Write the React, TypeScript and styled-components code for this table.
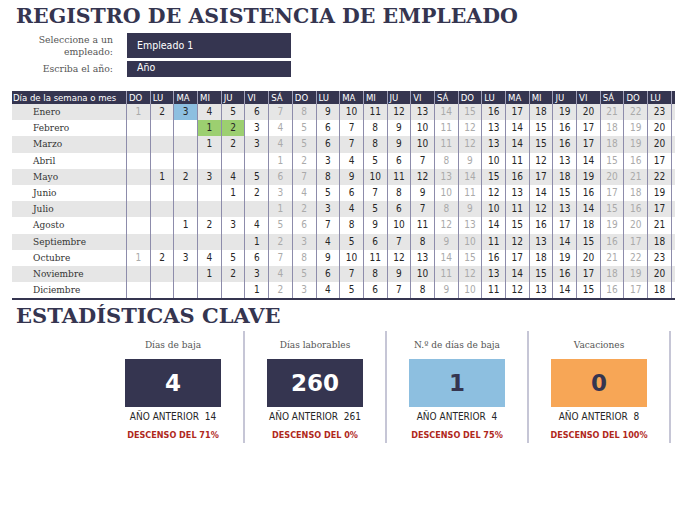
import React from "react";
import styled, { createGlobalStyle } from "styled-components";

const NAVY = "#353550";
const SANS = `"DejaVu Sans Condensed", "DejaVu Sans", "Liberation Sans", sans-serif`;

const Global = createGlobalStyle`
  html, body { margin: 0; padding: 0; background: #fff; overflow: hidden; }
  body { width: 675px; height: 520px; }
`;

const Page = styled.div`
  width: 675px;
  height: 520px;
  overflow: hidden;
  position: relative;
`;

const Title = styled.h1`
  margin: 0;
  padding: 4px 0 0 16px;
  font-family: "DejaVu Serif", serif;
  font-weight: 700;
  font-size: 20.5px;
  line-height: 24px;
  color: ${NAVY};
  white-space: nowrap;
`;

const Form = styled.div`
  display: grid;
  grid-template-columns: 113px 164px;
  grid-template-rows: 25px 16px;
  column-gap: 14px;
  row-gap: 3px;
  margin-top: 5px;
`;

const Label = styled.div`
  font-family: "DejaVu Serif", serif;
  font-size: 9.3px;
  line-height: 12px;
  color: #555;
  text-align: right;
  align-self: center;
`;

const Input = styled.div<{ $top?: boolean }>`
  background: ${NAVY};
  color: #fff;
  font-family: ${SANS};
  font-stretch: condensed;
  font-size: 10.5px;
  display: flex;
  align-items: ${(p) => (p.$top ? "flex-start" : "center")};
  padding-left: 10px;
  line-height: 13px;
`;

const TableWrap = styled.div`
  margin: 14px 0 0 12px;
  width: 663px;
  overflow: hidden;
  border-bottom: 2px solid ${NAVY};
`;

const Table = styled.div`
  display: grid;
  grid-template-columns: 114px repeat(23, 23.7px) 4px;
  grid-template-rows: 13px repeat(12, 16.2px);
  width: max-content;
`;

const HeadCell = styled.div<{ $first?: boolean }>`
  background: ${NAVY};
  color: #fff;
  font-family: ${SANS};
  font-stretch: condensed;
  font-size: 9.5px;
  line-height: 13px;
  padding-left: ${(p) => (p.$first ? "1px" : "2px")};
  border-left: ${(p) => (p.$first ? "none" : "1px solid #a0a0b8")};
  white-space: nowrap;
  overflow: hidden;
`;

const MonthCell = styled.div<{ $alt: boolean }>`
  background: ${(p) => (p.$alt ? "#e6e6e6" : "#fff")};
  font-family: "DejaVu Serif", serif;
  font-size: 9px;
  line-height: 16px;
  color: #333;
  padding-left: 21px;
  white-space: nowrap;
`;

const DayCell = styled.div<{ $alt: boolean; $weekend: boolean; $hl?: string }>`
  background: ${(p) => p.$hl || (p.$alt ? "#e6e6e6" : "#fff")};
  border-left: 1px solid #8d8cab;
  font-family: ${SANS};
  font-stretch: condensed;
  font-size: 10px;
  line-height: 16px;
  text-align: center;
  overflow: hidden;
  color: ${(p) => (p.$weekend ? "#aaaaaa" : "#262626")};
`;

const StatsTitle = styled.h2`
  margin: 4px 0 0 16px;
  font-family: "DejaVu Serif", serif;
  font-weight: 700;
  font-size: 21px;
  line-height: 24px;
  color: ${NAVY};
  white-space: nowrap;
`;

const Panels = styled.div`
  display: grid;
  grid-template-columns: repeat(4, 142px);
  margin: 3px 0 0 103px;
`;

const Panel = styled.div`
  border-right: 2px solid #c6c6d6;
  display: flex;
  flex-direction: column;
  align-items: center;
  padding-top: 8px;
  height: 112px;
  box-sizing: border-box;
`;

const PanelLabel = styled.div`
  font-family: "DejaVu Serif", serif;
  font-size: 9px;
  line-height: 12px;
  color: #555;
`;

const Box = styled.div<{ $bg: string; $fg: string }>`
  margin-top: 8px;
  width: 96px;
  height: 48px;
  background: ${(p) => p.$bg};
  color: ${(p) => p.$fg};
  display: flex;
  align-items: center;
  justify-content: center;
  font-family: "DejaVu Sans", Verdana, sans-serif;
  font-weight: 700;
  font-size: 23px;
`;

const Prev = styled.div`
  margin-top: 4px;
  font-family: ${SANS};
  font-stretch: condensed;
  font-size: 10px;
  line-height: 12px;
  color: #262626;
  white-space: pre;
`;

const Change = styled.div`
  margin-top: 6px;
  font-family: ${SANS};
  font-stretch: condensed;
  font-weight: 700;
  font-size: 9px;
  line-height: 12px;
  color: #b0281c;
`;

const DAYS = ["DO", "LU", "MA", "MI", "JU", "VI", "SÁ"];
const MONTHS = [
  "Enero", "Febrero", "Marzo", "Abril", "Mayo", "Junio",
  "Julio", "Agosto", "Septiembre", "Octubre", "Noviembre", "Diciembre",
];
const YEAR = 2017;
const NCOLS = 24;
const HIGHLIGHTS: Record<string, string> = {
  "0-3": "#8dbfe0",
  "1-1": "#9ccf70",
  "1-2": "#9ccf70",
};

const STATS = [
  { label: "Días de baja", value: "4", prev: "14", change: "71%", bg: NAVY, fg: "#fff" },
  { label: "Días laborables", value: "260", prev: "261", change: "0%", bg: NAVY, fg: "#fff" },
  { label: "N.º de días de baja", value: "1", prev: "4", change: "75%", bg: "#8dbfe0", fg: NAVY },
  { label: "Vacaciones", value: "0", prev: "8", change: "100%", bg: "#f7a656", fg: NAVY },
];

export default function App() {
  const cols = Array.from({ length: NCOLS }, (_, i) => i);
  return (
    <Page>
      <Global />
      <Title>REGISTRO DE ASISTENCIA DE EMPLEADO</Title>
      <Form>
        <Label>Seleccione a un<br />empleado:</Label>
        <Input>Empleado 1</Input>
        <Label>Escriba el año:</Label>
        <Input $top>Año</Input>
      </Form>
      <TableWrap>
        <Table>
          <HeadCell $first>Día de la semana o mes</HeadCell>
          {cols.map((c) => (
            <HeadCell key={"h" + c}>{c < NCOLS - 1 ? DAYS[c % 7] : ""}</HeadCell>
          ))}
          {MONTHS.map((m, mi) => {
            const alt = mi % 2 === 0;
            const offset = new Date(YEAR, mi, 1).getDay();
            const len = new Date(YEAR, mi + 1, 0).getDate();
            return (
              <React.Fragment key={m}>
                <MonthCell $alt={alt}>{m}</MonthCell>
                {cols.map((c) => {
                  const d = c - offset + 1;
                  const show = c < NCOLS - 1 && d >= 1 && d <= len;
                  const wd = c % 7;
                  return (
                    <DayCell
                      key={m + c}
                      $alt={alt}
                      $weekend={wd === 0 || wd === 6}
                      $hl={show ? HIGHLIGHTS[`${mi}-${d}`] : undefined}
                    >
                      {show ? d : ""}
                    </DayCell>
                  );
                })}
              </React.Fragment>
            );
          })}
        </Table>
      </TableWrap>
      <StatsTitle>ESTADÍSTICAS CLAVE</StatsTitle>
      <Panels>
        {STATS.map((s) => (
          <Panel key={s.label}>
            <PanelLabel>{s.label}</PanelLabel>
            <Box $bg={s.bg} $fg={s.fg}>{s.value}</Box>
            <Prev>{`AÑO ANTERIOR  ${s.prev}`}</Prev>
            <Change>DESCENSO DEL {s.change}</Change>
          </Panel>
        ))}
      </Panels>
    </Page>
  );
}
